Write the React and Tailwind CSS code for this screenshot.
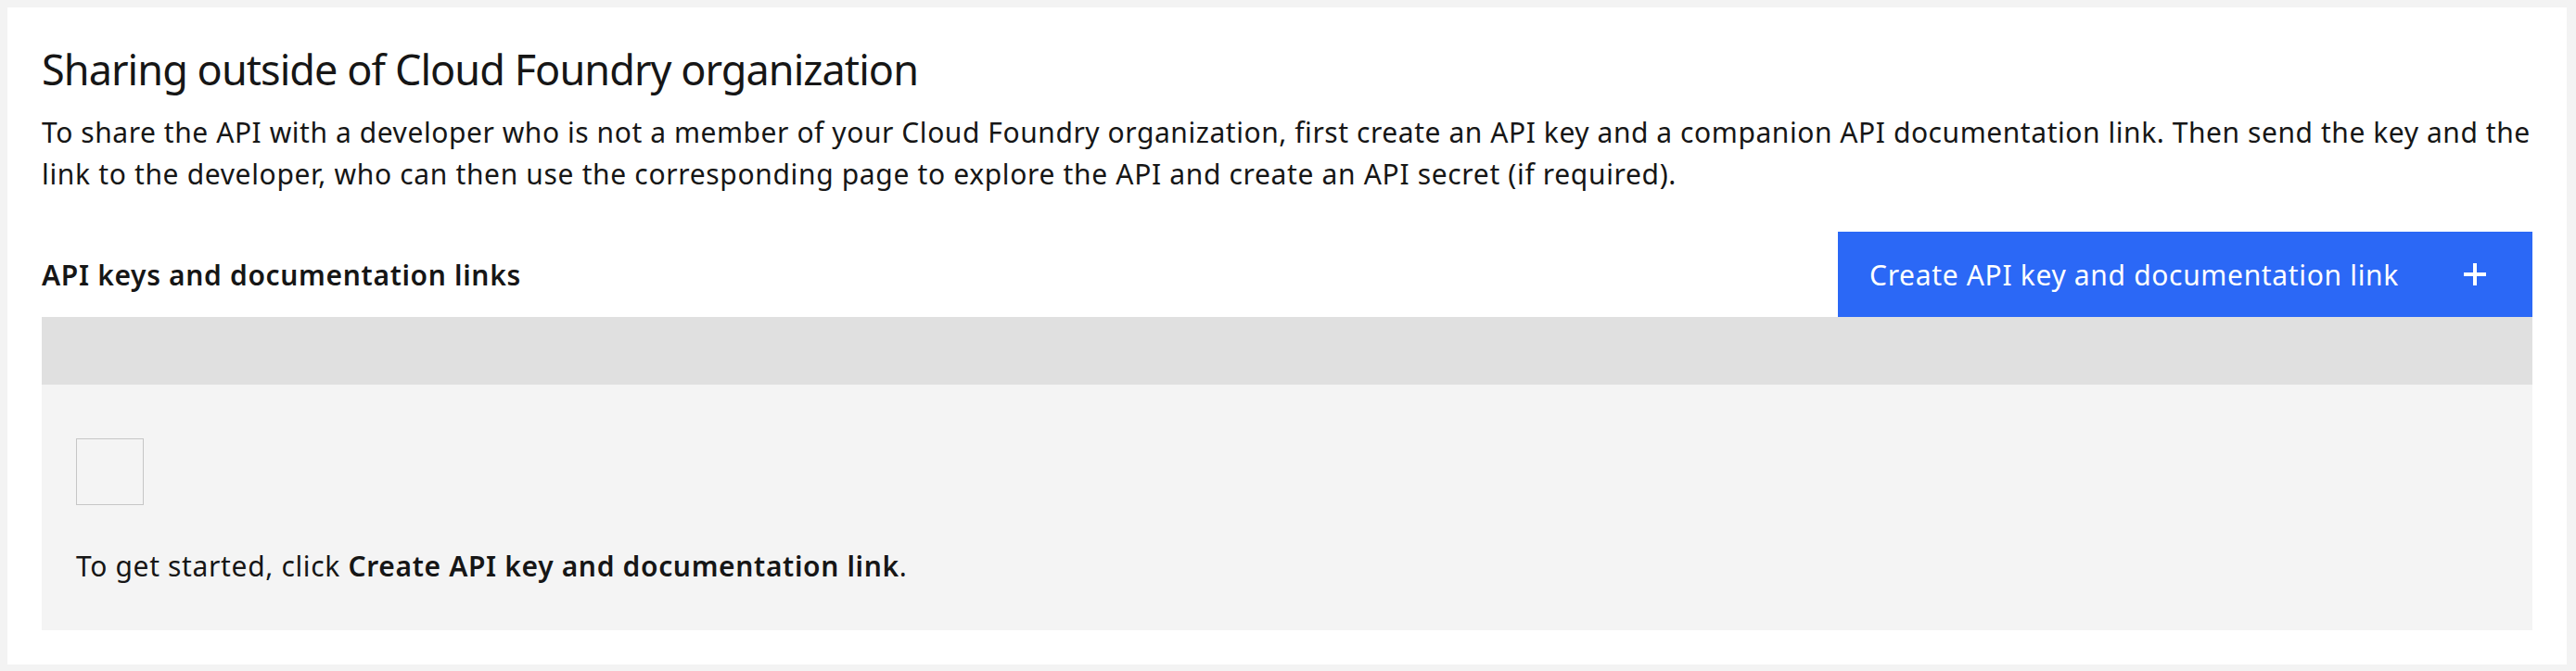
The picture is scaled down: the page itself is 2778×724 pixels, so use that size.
export default function App() {
  return (
    <div
      className="min-h-screen bg-[#f3f3f3] pt-[8px] pl-[8px] pr-[10px] pb-[7px] text-[#161616] font-['Noto_Sans','Roboto',sans-serif]"
    >
      <div className="bg-white px-[37px] pt-[37px] pb-[37px]">
        <h2 className="text-[45px] leading-[60px] font-normal tracking-[-0.94px]">
          Sharing outside of Cloud Foundry organization
        </h2>
        <p className="mt-[15px] text-[30px] leading-[45px]">
          <span className="block whitespace-nowrap tracking-[0.56px]">
            To share the API with a developer who is not a member of your Cloud Foundry organization, first create an API key and a companion API documentation link. Then send the key and the
          </span>
          <span className="block whitespace-nowrap tracking-[0.66px]">
            link to the developer, who can then use the corresponding page to explore the API and create an API secret (if required).
          </span>
        </p>
        <div className="mt-[40px] flex h-[92px] items-center justify-between">
          <h3 className="text-[30px] font-semibold leading-[45px] tracking-[0.66px]">API keys and documentation links</h3>
          <button className="flex h-[92px] w-[749px] items-center justify-between bg-[#2b68f6] pl-[34px] pr-[50px] text-[30px] leading-[45px] text-white">
            <span className="tracking-[0.67px]">Create API key and documentation link</span>
            <svg width="24" height="24" viewBox="0 0 24 24" fill="white" aria-hidden="true">
              <rect x="0" y="10" width="24" height="4" />
              <rect x="10" y="0" width="4" height="24" />
            </svg>
          </button>
        </div>
        <div className="h-[73px] bg-[#e0e0e0]" />
        <div className="h-[265px] bg-[#f4f4f4] px-[37px] pt-[58px]">
          <div className="h-[72px] w-[73px] border border-[#c6c6c6]" />
          <p className="mt-[43px] text-[30px] leading-[45px] tracking-[0.65px]">
            To get started, click <span className="font-semibold">Create API key and documentation link</span>.
          </p>
        </div>
      </div>
    </div>
  );
}
